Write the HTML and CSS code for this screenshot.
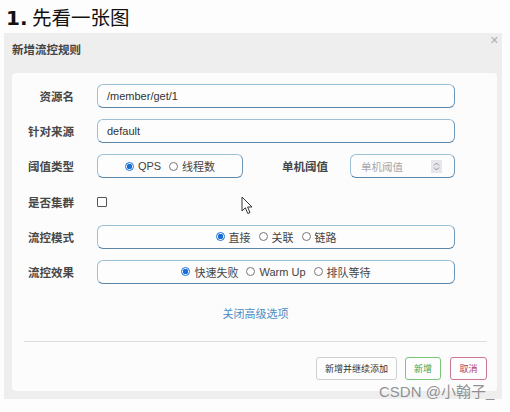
FILE: index.html
```html
<!DOCTYPE html>
<html lang="zh">
<head>
<meta charset="utf-8">
<link rel="stylesheet" href="styles.css">
</head>
<body>
<h1 class="heading"><span class="num">1.</span> 先看一张图</h1>
<div class="dialog">
  <div class="dialog-header">
    <span class="dialog-title">新增流控规则</span>
    <span class="close">&#x2715;</span>
  </div>
  <div class="card">
    <div class="form">
      <div class="row">
        <label class="label">资源名</label>
        <div class="field text-input">/member/get/1</div>
      </div>
      <div class="row">
        <label class="label">针对来源</label>
        <div class="field text-input">default</div>
      </div>
      <div class="row">
        <label class="label">阈值类型</label>
        <div class="field radio-box small">
          <span class="opt"><i class="radio on"></i>QPS</span>
          <span class="opt"><i class="radio"></i>线程数</span>
        </div>
        <label class="label label-2">单机阈值</label>
        <div class="field num-input">
          <span class="placeholder">单机阈值</span>
          <span class="spin"><svg width="7" height="9" viewBox="0 0 7 9"><path d="M1 3.5 L3.5 1 L6 3.5 M1 5.5 L3.5 8 L6 5.5" fill="none" stroke="#888" stroke-width="0.9"/></svg></span>
        </div>
      </div>
      <div class="row">
        <label class="label">是否集群</label>
        <span class="checkbox"></span>
      </div>
      <div class="row">
        <label class="label">流控模式</label>
        <div class="field radio-box">
          <span class="opt"><i class="radio on"></i>直接</span>
          <span class="opt"><i class="radio"></i>关联</span>
          <span class="opt"><i class="radio"></i>链路</span>
        </div>
      </div>
      <div class="row">
        <label class="label">流控效果</label>
        <div class="field radio-box">
          <span class="opt"><i class="radio on"></i>快速失败</span>
          <span class="opt"><i class="radio"></i>Warm Up</span>
          <span class="opt"><i class="radio"></i>排队等待</span>
        </div>
      </div>
    </div>
    <div class="advanced"><a class="link">关闭高级选项</a></div>
    <div class="divider"></div>
    <div class="footer">
      <button class="btn">新增并继续添加</button>
      <button class="btn btn-green">新增</button>
      <button class="btn btn-red">取消</button>
    </div>
  </div>
</div>
<svg class="cursor" width="13" height="19" viewBox="0 0 13 19"><path d="M1 1 L1 15 L4.3 11.8 L6.8 17.5 L9 16.5 L6.6 11 L11 11 Z" fill="#fff" stroke="#333" stroke-width="1"/></svg>
<div class="watermark">CSDN @小翰子_</div>
</body>
</html>
```
FILE: styles.css
```css
* { box-sizing: border-box; }
body {
  margin: 0;
  background: #fdfdfd;
  font-family: "Liberation Sans", "Noto Sans CJK SC", sans-serif;
  position: relative;
  width: 510px;
  height: 412px;
  overflow: hidden;
}
.heading {
  margin: 0;
  height: 33px;
  padding: 4px 0 0 6px;
  font-size: 19.5px;
  line-height: 26px;
  font-weight: normal;
  color: #111;
  font-family: "Noto Sans CJK SC", sans-serif;
}
.heading .num {
  font-family: "DejaVu Sans", sans-serif;
  font-weight: bold;
  font-size: 20px;
}
.dialog {
  margin-left: 4px;
  width: 498px;
  height: 366px;
  background: #eeeeee;
  padding: 0 5px 0 8px;
}
.dialog-header {
  height: 40px;
  display: flex;
  justify-content: space-between;
  align-items: flex-start;
}
.dialog-title {
  font-size: 11.5px;
  font-weight: bold;
  color: #444;
  padding-top: 9px;
  line-height: 16px;
}
.close {
  color: #b0b0b0;
  font-size: 11px;
  padding-top: 1px;
  margin-right: -2px;
  font-family: "DejaVu Sans", sans-serif;
}
.card {
  background: #fcfcfc;
  height: 318px;
  border-radius: 4px;
  padding: 11px 10px 0 12px;
  display: flex;
  flex-direction: column;
}
.form {
  display: flex;
  flex-direction: column;
  gap: 11.2px;
}
.row {
  display: flex;
  align-items: center;
  height: 24px;
}
.label {
  width: 50px;
  margin-right: 23px;
  text-align: right;
  font-size: 11.5px;
  font-weight: bold;
  color: #474747;
  white-space: nowrap;
}
.label-2 {
  width: 85px;
  margin-right: 22px;
}
.field {
  height: 24px;
  border: 1px solid #9cc0d6;
  border-bottom-color: #5a86aa;
  border-right-color: #6f98b8;
  border-radius: 6px;
  background: #fdfdfd;
  font-size: 11px;
  color: #333;
  display: flex;
  align-items: center;
}
.text-input {
  width: 358px;
  padding-left: 9px;
  font-size: 11px;
}
.radio-box {
  width: 358px;
  justify-content: center;
  gap: 8px;
}
.radio-box.small { width: 146px; }
.opt {
  display: inline-flex;
  align-items: center;
  gap: 4px;
  color: #444;
}
.radio {
  width: 9px;
  height: 9px;
  border-radius: 50%;
  border: 1px solid #777;
  background: #fff;
  display: inline-block;
}
.radio.on {
  border-color: #1a6fd4;
  background: radial-gradient(circle, #1a6fd4 0 2.6px, #fff 3px);
}
.num-input {
  width: 105px;
  padding: 0 12px 0 10px;
  justify-content: space-between;
}
.placeholder {
  color: #a8a8a8;
  font-size: 10.5px;
}
.spin {
  width: 11px;
  height: 13px;
  background: #e6e6ec;
  display: flex;
  align-items: center;
  justify-content: center;
}
.checkbox {
  width: 10px;
  height: 10px;
  border: 1px solid #555;
  border-radius: 1px;
  background: #fff;
}
.advanced {
  margin-top: 23px;
  text-align: center;
  font-size: 11px;
  line-height: 14px;
}
.link { color: #4a8cc4; }
.divider {
  margin-top: 20px;
  height: 1px;
  background: #dddddd;
}
.footer {
  margin-top: 15px;
  display: flex;
  justify-content: flex-end;
  gap: 8px;
}
.btn {
  height: 23px;
  padding: 0 8px;
  border: 1px solid #cfcfcf;
  border-radius: 3px;
  background: #fdfdfd;
  font-family: "Noto Sans CJK SC", sans-serif;
  font-size: 9px;
  color: #333;
}
.btn-green { border-color: #7bc77b; color: #3fa34d; }
.btn-red { border-color: #cc7792; color: #b23a60; margin-left: 1px; padding: 0 8.5px; }
.cursor {
  position: absolute;
  left: 241px;
  top: 196px;
}
.watermark {
  position: absolute;
  left: 379px;
  top: 382px;
  font-size: 15px;
  color: rgba(110, 110, 110, 0.75);
  line-height: 20px;
  white-space: nowrap;
}
```
